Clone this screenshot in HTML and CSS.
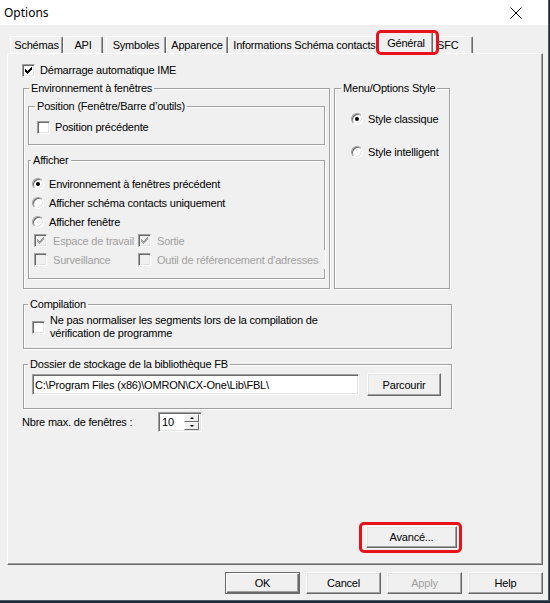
FILE: index.html
```html
<!DOCTYPE html>
<html lang="fr">
<head>
<meta charset="utf-8">
<title>Options</title>
<link rel="stylesheet" href="styles.css">
</head>
<body>
<div class="window">
  <div class="titlebar">
    <span class="title">Options</span>
    <svg class="close" width="12" height="12" viewBox="0 0 12 12"><path d="M0.5 0.5L11.5 11.5M11.5 0.5L0.5 11.5" stroke="#000" stroke-width="1" fill="none"/></svg>
  </div>

  <div class="tabs">
    <div class="tab t-schemas">Schémas</div>
    <div class="tab t-api">API</div>
    <div class="tab t-symb">Symboles</div>
    <div class="tab t-app">Apparence</div>
    <div class="tab t-info">Informations Schéma contacts</div>
    <div class="tab tab-active t-gen">Général<span class="hl hl-tab"></span></div>
    <div class="tab t-sfc">SFC</div>
  </div>

  <div class="panel">
    <div class="row ime">
      <span class="cb"><svg width="7" height="7" viewBox="0 0 7 7"><path d="M0 2H1V3H2V4H3V3H4V2H5V1H6V0H7V3H6V4H5V5H4V6H3V7H2V6H1V5H0Z" fill="#000"/></svg></span>
      <span>Démarrage automatique IME</span>
    </div>

    <div class="top-groups">
      <fieldset class="group g-env">
        <legend>Environnement à fenêtres</legend>
        <div class="env-body">
          <fieldset class="group g-pos">
            <legend>Position (Fenêtre/Barre d’outils)</legend>
            <div class="pos-body">
              <div class="row"><span class="cb"></span><span>Position précédente</span></div>
            </div>
          </fieldset>
          <fieldset class="group g-aff">
            <legend>Afficher</legend>
            <div class="aff-body">
              <div class="rrow"><span class="rb rb-on"></span><span>Environnement à fenêtres précédent</span></div>
              <div class="rrow"><span class="rb"></span><span>Afficher schéma contacts uniquement</span></div>
              <div class="rrow"><span class="rb"></span><span>Afficher fenêtre</span></div>
              <div class="opts">
                <div class="opt"><span class="cb cb-dis"><svg width="7" height="7" viewBox="0 0 7 7"><path d="M0 2H1V3H2V4H3V3H4V2H5V1H6V0H7V3H6V4H5V5H4V6H3V7H2V6H1V5H0Z" fill="#a0a0a0"/></svg></span><span>Espace de travail</span></div>
                <div class="opt"><span class="cb cb-dis"><svg width="7" height="7" viewBox="0 0 7 7"><path d="M0 2H1V3H2V4H3V3H4V2H5V1H6V0H7V3H6V4H5V5H4V6H3V7H2V6H1V5H0Z" fill="#a0a0a0"/></svg></span><span>Sortie</span></div>
                <div class="opt"><span class="cb cb-dis"></span><span>Surveillance</span></div>
                <div class="opt opt-wide"><span class="cb cb-dis"></span><span>Outil de référencement d'adresses</span></div>
              </div>
            </div>
          </fieldset>
        </div>
      </fieldset>

      <fieldset class="group g-menu">
        <legend>Menu/Options Style</legend>
        <div class="menu-body">
          <div class="rrow"><span class="rb rb-on"></span><span>Style classique</span></div>
          <div class="rrow rrow-2"><span class="rb"></span><span>Style intelligent</span></div>
        </div>
      </fieldset>
    </div>

    <fieldset class="group g-comp">
      <legend>Compilation</legend>
      <div class="comp-body">
        <div class="comp-row"><span class="cb"></span><span>Ne pas normaliser les segments lors de la compilation de<br>vérification de programme</span></div>
      </div>
    </fieldset>

    <fieldset class="group g-fb">
      <legend>Dossier de stockage de la bibliothèque FB</legend>
      <div class="fb-body">
        <div class="fb-row">
          <div class="path">C:\Program Files (x86)\OMRON\CX-One\Lib\FBL\</div>
          <div class="btn btn-browse">Parcourir</div>
        </div>
      </div>
    </fieldset>

    <div class="nbre-row">
      <span class="nbre-label">Nbre max. de fenêtres :</span>
      <div class="spin">
        <span class="spin-val">10</span>
        <div class="spin-btns">
          <span class="spin-btn spin-up"></span>
          <span class="spin-btn spin-down"></span>
        </div>
      </div>
    </div>

    <div class="btn btn-adv">Avancé...<span class="hl hl-adv"></span></div>
  </div>

  <div class="buttons">
    <div class="btn btn-default">OK</div>
    <div class="btn">Cancel</div>
    <div class="btn btn-dis">Apply</div>
    <div class="btn">Help</div>
  </div>
</div>
</body>
</html>
```

FILE: styles.css
```css
* { box-sizing: border-box; }

body {
  margin: 0;
  background: #1e2a38;
  font-family: "Liberation Sans", Arial, sans-serif;
  font-size: 11px;
  letter-spacing: -0.2px;
  color: #000;
}

.window {
  width: 549px;
  height: 601px;
  background: #f0f0f0;
  border-right: 1px solid #4c5a6a;
  border-bottom: 1px solid #4c5a6a;
  display: flex;
  flex-direction: column;
}

/* title bar */
.titlebar {
  height: 25px;
  flex: none;
  background: #fff;
  display: flex;
  align-items: center;
  justify-content: space-between;
  padding: 0 26px 0 4px;
}
.title {
  font-family: "Noto Sans", "Open Sans", sans-serif;
  font-size: 12px;
  letter-spacing: 0;
}
.close { display: block; }

/* tabs */
.tabs {
  height: 28px;
  flex: none;
  display: flex;
  align-items: flex-end;
  padding-left: 10px;
}
.tab {
  height: 17px;
  border-top: 1px solid #fff;
  border-left: 1px solid #fff;
  border-right: 1px solid #696969;
  box-shadow: inset -1px 0 #a0a0a0;
  border-radius: 2px 2px 0 0;
  text-align: center;
  line-height: 16px;
  white-space: nowrap;
  flex: none;
}
.t-schemas { width: 53px; }
.t-api { width: 40px; }
.t-symb { width: 60px; margin-left: 3px; }
.t-app { width: 62px; }
.t-info { width: 153px; }
.t-gen { width: 54px; }
.t-sfc { width: 42px; text-align: left; padding-left: 5px; }
.tab-active {
  height: 22px;
  margin: 0 -2px -1px;
  position: relative;
  z-index: 1;
  background: #f0f0f0;
  line-height: 20px;
}

/* highlight boxes */
.hl {
  position: absolute;
  border: 3px solid #e8121b;
  border-radius: 5px;
  pointer-events: none;
}
.hl-tab { left: -4px; top: -3px; right: -7px; bottom: -1px; }
.hl-adv { left: -8px; top: -5px; right: -6px; bottom: -6px; }

/* panel */
.panel {
  margin-left: 7px;
  width: 536px;
  height: 512px;
  flex: none;
  border: 1px solid;
  border-color: #fff #696969 #696969 #fff;
  box-shadow: inset -1px -1px #a0a0a0;
  display: flex;
  flex-direction: column;
  padding: 9px 0 16px 14px;
}

.row {
  display: flex;
  align-items: center;
  gap: 5px;
  height: 14px;
  line-height: 14px;
  white-space: nowrap;
}

/* checkbox */
.cb {
  width: 13px;
  height: 13px;
  flex: none;
  background: #fff;
  border: 1px solid;
  border-color: #a0a0a0 #fff #fff #a0a0a0;
  box-shadow: inset 1px 1px #696969, inset -1px -1px #e3e3e3;
  display: flex;
  align-items: center;
  justify-content: center;
}
.cb svg { display: block; }
.cb-dis { background: #f0f0f0; }

/* radio */
.rb {
  width: 12px;
  height: 12px;
  flex: none;
  border-radius: 50%;
  background: #fff;
  border: 1px solid;
  border-color: #a0a0a0 #fff #fff #a0a0a0;
  box-shadow: inset 1px 1px #696969, inset -1px -1px #e3e3e3;
  display: flex;
  align-items: center;
  justify-content: center;
}
.rb-on::after {
  content: "";
  width: 4px;
  height: 4px;
  border-radius: 50%;
  background: #000;
}
.rrow {
  display: flex;
  align-items: center;
  gap: 5px;
  height: 19px;
  white-space: nowrap;
}

/* group boxes */
fieldset.group {
  margin: 0;
  padding: 0;
  min-width: 0;
  border: 1px solid #a0a0a0;
  box-shadow: inset 1px 1px #fff, 1px 1px #fff;
}
fieldset.group > legend {
  padding: 0 2px;
  line-height: 14px;
  white-space: nowrap;
}

.top-groups {
  display: flex;
  margin-top: 4px;
  margin-left: 1px;
  align-items: stretch;
}

.g-env { width: 307px; flex: none; }
.g-env > legend { margin-left: 5px; }
.env-body { padding: 4px 4px 9px 4px; }

.g-pos > legend { margin-left: 6px; }
.pos-body { padding: 7px 8px 10px; }

.g-aff { margin-top: 8px !important; }
.g-aff > legend { margin-left: 2px; }
.aff-body { padding: 7px 3px 9px; }

.opts {
  display: grid;
  grid-template-columns: 104px auto;
  margin-left: 2px;
}
.opt {
  display: flex;
  align-items: center;
  gap: 6px;
  height: 19px;
  color: #a0a0a0;
  white-space: nowrap;
}
.opt-wide {
  width: 187px;
  background: #f0f0f0;
  position: relative;
}

.g-menu { width: 116px; flex: none; margin-left: 4px !important; }
.g-menu > legend { margin-left: 6px; }
.menu-body { padding: 14px 0 0 16px; }
.rrow-2 { margin-top: 14px; }

.g-comp { width: 429px; margin: 8px 0 0 1px !important; }
.g-comp > legend { margin-left: 4px; }
.comp-body { padding: 3px 8px 8px; }
.comp-row {
  display: flex;
  align-items: center;
  gap: 5px;
  line-height: 13px;
  white-space: nowrap;
}

.g-fb { width: 429px; margin: 8px 0 0 1px !important; }
.g-fb > legend { margin-left: 4px; }
.fb-body { padding: 2px 8px 12px; }
.fb-row {
  display: flex;
  align-items: center;
  gap: 8px;
  height: 23px;
}
.path {
  width: 327px;
  height: 21px;
  background: #fff;
  border: 1px solid;
  border-color: #a0a0a0 #fff #fff #a0a0a0;
  box-shadow: inset 1px 1px #696969, inset -1px -1px #e3e3e3;
  display: flex;
  align-items: center;
  padding-left: 2px;
  white-space: nowrap;
  overflow: hidden;
}

/* spin */
.nbre-row {
  display: flex;
  align-items: center;
  height: 20px;
  margin-top: 3px;
}
.nbre-label { width: 136px; white-space: nowrap; }
.spin {
  width: 44px;
  height: 20px;
  background: #fff;
  border: 1px solid;
  border-color: #a0a0a0 #fff #fff #a0a0a0;
  box-shadow: inset 1px 1px #696969, inset -1px -1px #e3e3e3;
  display: flex;
  align-items: center;
  padding-left: 3px;
}
.spin-val { flex: 1; }
.spin-btns {
  display: flex;
  flex-direction: column;
  margin-right: 2px;
}
.spin-btn {
  width: 15px;
  height: 8px;
  background: #f0f0f0;
  border: 1px solid;
  border-color: #fff #696969 #696969 #fff;
  display: flex;
  align-items: center;
  justify-content: center;
}
.spin-up::after {
  content: "";
  border-left: 2px solid transparent;
  border-right: 2px solid transparent;
  border-bottom: 2px solid #000;
}
.spin-down::after {
  content: "";
  border-left: 2px solid transparent;
  border-right: 2px solid transparent;
  border-top: 2px solid #000;
}

/* buttons */
.btn {
  width: 75px;
  height: 22px;
  flex: none;
  background: #f0f0f0;
  border: 1px solid;
  border-color: #fff #696969 #696969 #fff;
  box-shadow: inset -1px -1px #a0a0a0, inset 1px 1px #e3e3e3;
  display: flex;
  align-items: center;
  justify-content: center;
  white-space: nowrap;
}
.btn-browse { width: 74px; height: 23px; }
.btn-adv {
  width: 91px;
  margin-top: auto;
  align-self: flex-end;
  margin-right: 85px;
  position: relative;
}
.btn-default {
  border-color: #696969;
  box-shadow: inset 1px 1px #fff, inset -1px -1px #696969, inset -2px -2px #a0a0a0;
}
.btn-dis { color: #a0a0a0; }

.buttons {
  display: flex;
  justify-content: flex-end;
  gap: 6px;
  padding-right: 5px;
  margin-top: 7px;
}
```
